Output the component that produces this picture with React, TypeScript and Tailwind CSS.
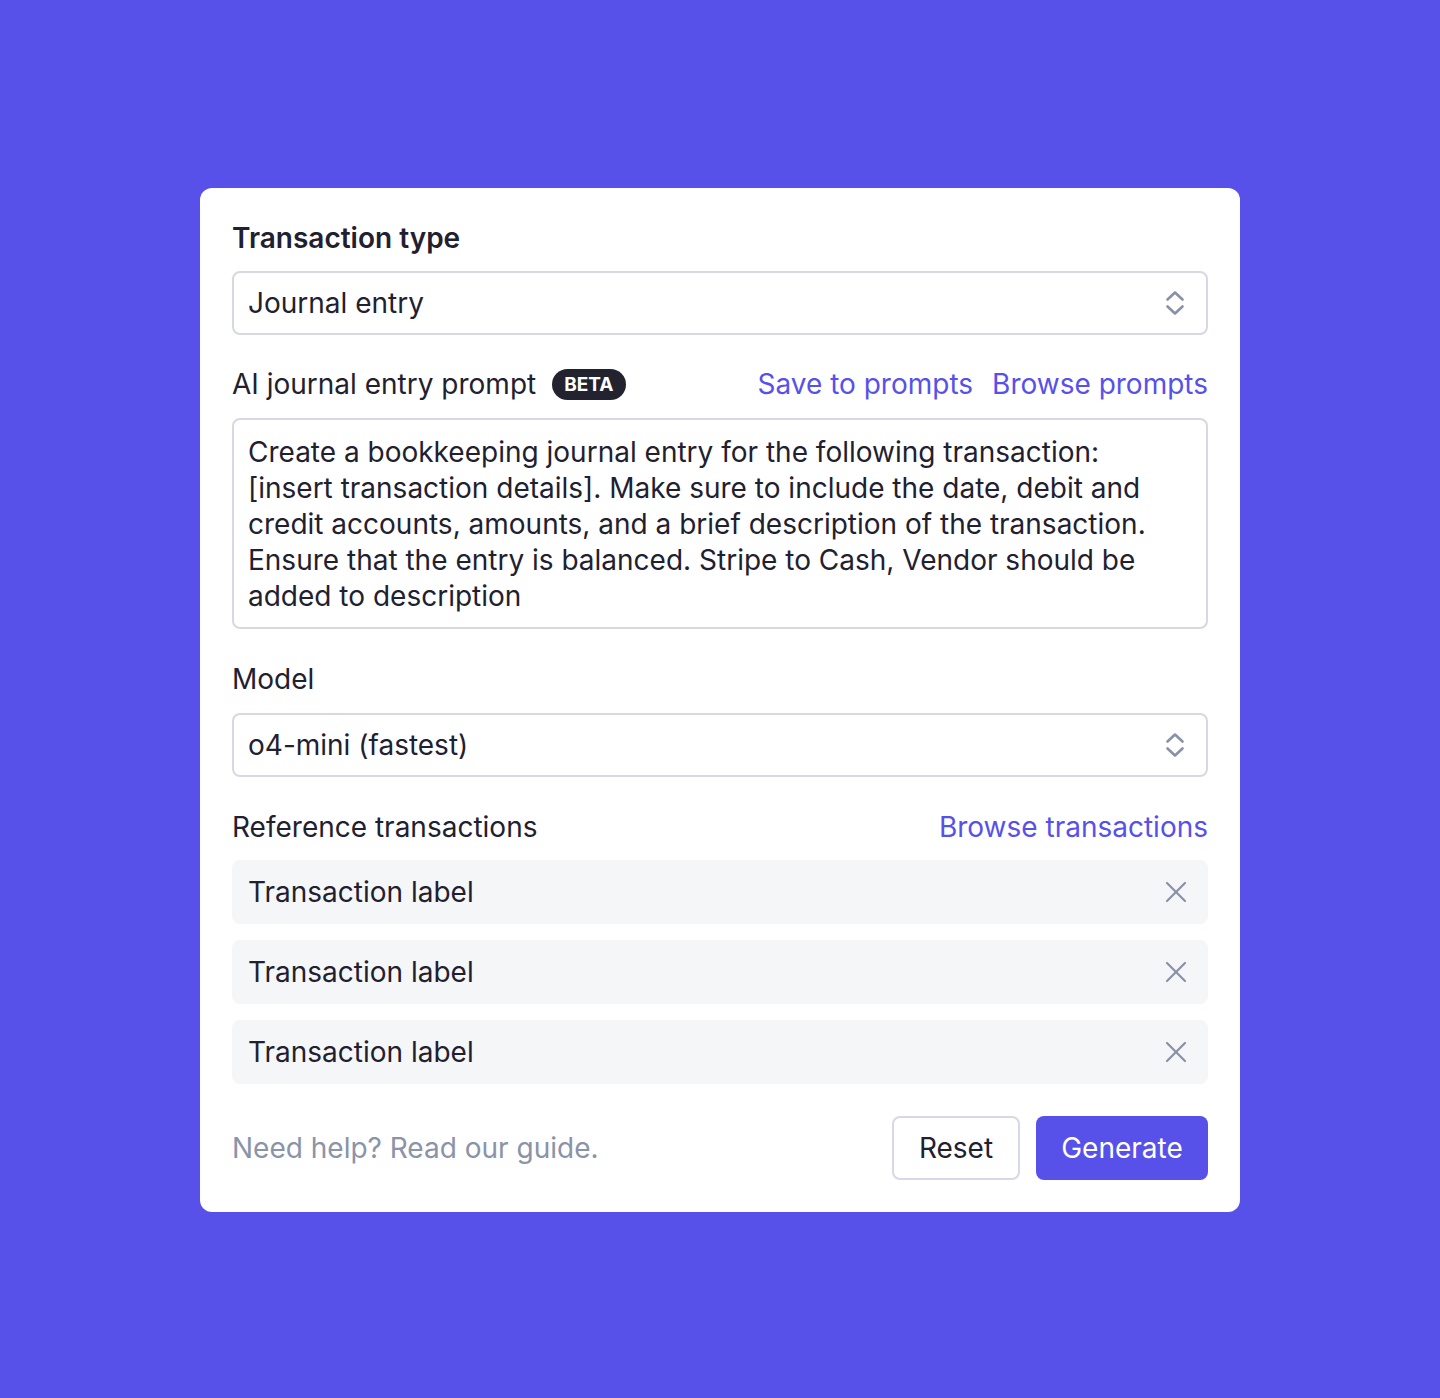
import React from "react";

function UpDown() {
  return (
    <svg width="20" height="26" viewBox="0 0 20 26" fill="none" stroke="#8a91a6" strokeWidth="2.6" strokeLinecap="round" strokeLinejoin="round">
      <path d="M2.5 9.5 L10 2.5 L17.5 9.5" />
      <path d="M2.5 16.5 L10 23.5 L17.5 16.5" />
    </svg>
  );
}

function XIcon() {
  return (
    <svg width="22" height="22" viewBox="0 0 22 22" fill="none" stroke="#8a91a6" strokeWidth="2.2" strokeLinecap="round">
      <path d="M2 2 L20 20" />
      <path d="M20 2 L2 20" />
    </svg>
  );
}

function Select({ value }: { value: string }) {
  return (
    <div className="flex h-[64px] items-center justify-between rounded-[8px] border-2 border-[#d6d9e3] pl-[14px] pr-[21px] text-[#1f2130]">
      <span>{value}</span>
      <UpDown />
    </div>
  );
}

function Row() {
  return (
    <div className="flex h-[64px] items-center justify-between rounded-[8px] bg-[#f5f6f8] pl-4 pr-[21px] text-[#1f2130]">
      <span>Transaction label</span>
      <XIcon />
    </div>
  );
}

export default function App() {
  return (
    <div
      className="flex min-h-[1398px] w-full items-start justify-center bg-[#5751ea] pt-[188px]"
      style={{ fontFamily: "Inter, 'Noto Sans', sans-serif" }}
    >
      <div className="flex w-[1040px] flex-col rounded-[12px] bg-white p-[32px] text-[28px] leading-[36px] text-[#1f2130]">
        <div className="font-semibold">Transaction type</div>
        <div className="mt-[15px]">
          <Select value="Journal entry" />
        </div>

        <div className="mt-[31px] flex items-center justify-between">
          <div className="flex items-center">
            <span>AI journal entry prompt</span>
            <span className="ml-[16px] flex h-[31px] items-center rounded-full bg-[#22232f] px-[12px] text-[19px] font-bold leading-none text-white">
              BETA
            </span>
          </div>
          <div className="flex gap-[19px] text-[#5751ea]">
            <span>Save to prompts</span>
            <span>Browse prompts</span>
          </div>
        </div>
        <div className="mt-[16px] rounded-[8px] border-2 border-[#d6d9e3] pl-[14px] pr-[40px] pt-[14px] pb-[13px]">
          Create a bookkeeping journal entry for the following transaction: [insert transaction details]. Make sure to include the date, debit and credit accounts, amounts, and a brief description of the transaction. Ensure that the entry is balanced. Stripe to Cash, Vendor should be added to description
        </div>

        <div className="mt-[32px]">Model</div>
        <div className="mt-[16px]">
          <Select value="o4-mini (fastest)" />
        </div>

        <div className="mt-[32px] flex items-center justify-between">
          <span>Reference transactions</span>
          <span className="text-[#5751ea]">Browse transactions</span>
        </div>
        <div className="mt-[15px] flex flex-col gap-[16px]">
          <Row />
          <Row />
          <Row />
        </div>

        <div className="mt-[32px] flex items-center justify-between">
          <span className="text-[#8a93a8]">Need help? Read our guide.</span>
          <div className="flex gap-[16px]">
            <button className="flex h-[64px] w-[128px] items-center justify-center rounded-[8px] border-2 border-[#d6d9e3] bg-white text-[#1f2130]">
              Reset
            </button>
            <button className="flex h-[64px] w-[172px] items-center justify-center rounded-[8px] bg-[#5751ea] text-white">
              Generate
            </button>
          </div>
        </div>
      </div>
    </div>
  );
}
